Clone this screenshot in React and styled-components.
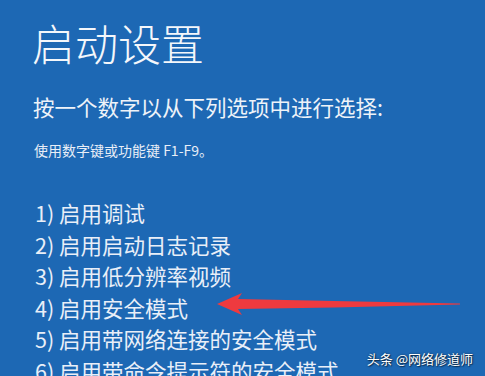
import React from "react";
import styled, { createGlobalStyle } from "styled-components";

const Global = createGlobalStyle`
  html, body { margin: 0; padding: 0; }
  body {
    width: 485px;
    height: 376px;
    overflow: hidden;
    background: #1d68b4;
    font-family: "Noto Sans CJK SC", "Noto Sans", sans-serif;
    color: #ffffff;
  }
`;

const Screen = styled.div`
  position: relative;
  width: 485px;
  height: 376px;
  overflow: hidden;
  background: #1d68b4;
  padding: 14px 0 0 32px;
  box-sizing: border-box;
  display: flex;
  flex-direction: column;
`;

const Title = styled.h1`
  margin: 0;
  font-size: 43px;
  line-height: 56px;
  font-weight: 300;
  color: #f4f7fb;
`;

const Prompt = styled.p`
  margin: 22px 0 0 1px;
  font-size: 21.5px;
  line-height: 30px;
  font-weight: 400;
  color: #eef3f9;
`;

const Hint = styled.p`
  margin: 18px 0 0 2px;
  font-size: 14px;
  line-height: 20px;
  color: #e8eef7;
`;

const Options = styled.ol`
  list-style: none;
  margin: 37px 0 0 3px;
  padding: 0;
  display: flex;
  flex-direction: column;
`;

const Option = styled.li`
  font-size: 21.5px;
  line-height: 31.6px;
  color: #e9eff8;
  white-space: nowrap;
`;

const Arrow = styled.svg`
  position: absolute;
  left: 214px;
  top: 288px;
`;

const Watermark = styled.div`
  position: absolute;
  right: 12px;
  bottom: 9px;
  font-size: 13px;
  line-height: 16px;
  color: #ffffff;
  text-shadow: 0 0 2px rgba(0, 0, 0, 0.6), 1px 1px 1px rgba(0, 0, 0, 0.5);
  white-space: nowrap;
`;

const options = [
  "1) 启用调试",
  "2) 启用启动日志记录",
  "3) 启用低分辨率视频",
  "4) 启用安全模式",
  "5) 启用带网络连接的安全模式",
  "6) 启用带命令提示符的安全模式",
];

export default function App() {
  return (
    <>
      <Global />
      <Screen>
        <Title>启动设置</Title>
        <Prompt>按一个数字以从下列选项中进行选择:</Prompt>
        <Hint>使用数字键或功能键 F1-F9。</Hint>
        <Options>
          {options.map((o) => (
            <Option key={o}>{o}</Option>
          ))}
        </Options>
        <Arrow width="250" height="32" viewBox="0 0 250 32">
          <path
            d="M3 16 L28 5 L24 11 L120 13 L246 15.5 L246 16.5 L120 19.5 L24 21 L28 27 Z"
            fill="#ee3a3f"
          />
        </Arrow>
        <Watermark>头条 @网络修道师</Watermark>
      </Screen>
    </>
  );
}
